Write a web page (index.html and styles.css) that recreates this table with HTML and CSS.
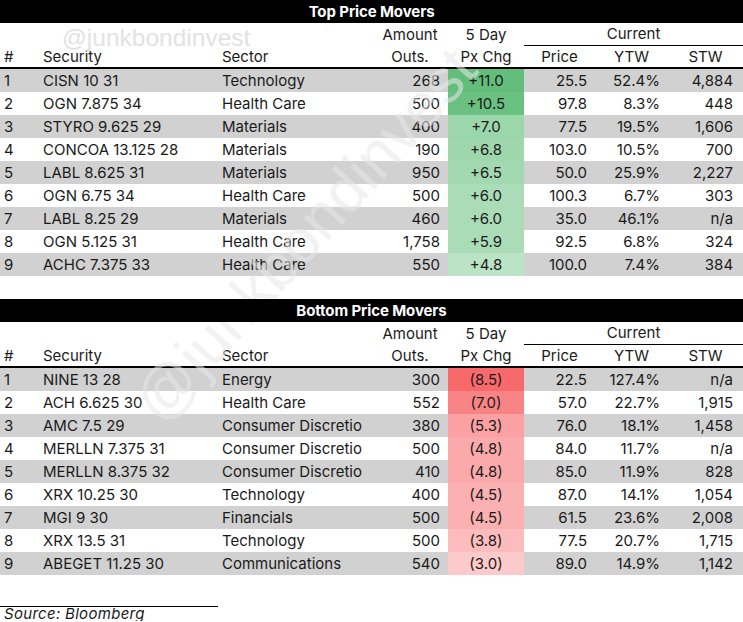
FILE: index.html
```html
<!DOCTYPE html>
<html>
<head>
<meta charset="utf-8">
<link rel="stylesheet" href="styles.css">
</head>
<body>
<div class="page">
  <div class="wm-top">@junkbondinvest</div>
  <div class="wm-diag">@junkbondinvest</div>

  <table class="movers">
    <colgroup>
      <col class="c-num"><col class="c-sec"><col class="c-sector"><col class="c-amt"><col class="c-chg"><col class="c-price"><col class="c-ytw"><col class="c-stw">
    </colgroup>
    <thead>
      <tr class="title"><th colspan="8"><span class="title-text">Top Price Movers</span></th></tr>
      <tr class="h1"><th></th><th></th><th></th><th class="ctr">Amount</th><th class="ctr">5 Day</th><th colspan="3" class="ctr current">Current</th></tr>
      <tr class="h2"><th class="lft num">#</th><th class="lft">Security</th><th class="lft">Sector</th><th class="ctr">Outs.</th><th class="ctr">Px Chg</th><th class="ctr">Price</th><th class="ctr">YTW</th><th class="ctr">STW</th></tr>
    </thead>
    <tbody>
      <tr class="odd"><td class="num">1</td><td>CISN 10 31</td><td>Technology</td><td class="amt">268</td><td class="chg" style="background:rgb(99,190,123)">+11.0</td><td class="price">25.5</td><td class="ytw">52.4%</td><td class="stw">4,884</td></tr>
      <tr><td class="num">2</td><td>OGN 7.875 34</td><td>Health Care</td><td class="amt">500</td><td class="chg" style="background:rgb(106,193,129)">+10.5</td><td class="price">97.8</td><td class="ytw">8.3%</td><td class="stw">448</td></tr>
      <tr class="odd"><td class="num">3</td><td>STYRO 9.625 29</td><td>Materials</td><td class="amt">400</td><td class="chg" style="background:rgb(156,214,171)">+7.0</td><td class="price">77.5</td><td class="ytw">19.5%</td><td class="stw">1,606</td></tr>
      <tr><td class="num">4</td><td>CONCOA 13.125 28</td><td>Materials</td><td class="amt">190</td><td class="chg" style="background:rgb(159,215,173)">+6.8</td><td class="price">103.0</td><td class="ytw">10.5%</td><td class="stw">700</td></tr>
      <tr class="odd"><td class="num">5</td><td>LABL 8.625 31</td><td>Materials</td><td class="amt">950</td><td class="chg" style="background:rgb(163,217,177)">+6.5</td><td class="price">50.0</td><td class="ytw">25.9%</td><td class="stw">2,227</td></tr>
      <tr><td class="num">6</td><td>OGN 6.75 34</td><td>Health Care</td><td class="amt">500</td><td class="chg" style="background:rgb(170,220,183)">+6.0</td><td class="price">100.3</td><td class="ytw">6.7%</td><td class="stw">303</td></tr>
      <tr class="odd"><td class="num">7</td><td>LABL 8.25 29</td><td>Materials</td><td class="amt">460</td><td class="chg" style="background:rgb(170,220,183)">+6.0</td><td class="price">35.0</td><td class="ytw">46.1%</td><td class="stw">n/a</td></tr>
      <tr><td class="num">8</td><td>OGN 5.125 31</td><td>Health Care</td><td class="amt">1,758</td><td class="chg" style="background:rgb(171,220,184)">+5.9</td><td class="price">92.5</td><td class="ytw">6.8%</td><td class="stw">324</td></tr>
      <tr class="odd"><td class="num">9</td><td>ACHC 7.375 33</td><td>Health Care</td><td class="amt">550</td><td class="chg" style="background:rgb(187,227,197)">+4.8</td><td class="price">100.0</td><td class="ytw">7.4%</td><td class="stw">384</td></tr>
    </tbody>
  </table>

  <table class="movers second">
    <colgroup>
      <col class="c-num"><col class="c-sec"><col class="c-sector"><col class="c-amt"><col class="c-chg"><col class="c-price"><col class="c-ytw"><col class="c-stw">
    </colgroup>
    <thead>
      <tr class="title"><th colspan="8"><span class="title-text">Bottom Price Movers</span></th></tr>
      <tr class="h1"><th></th><th></th><th></th><th class="ctr">Amount</th><th class="ctr">5 Day</th><th colspan="3" class="ctr current">Current</th></tr>
      <tr class="h2"><th class="lft num">#</th><th class="lft">Security</th><th class="lft">Sector</th><th class="ctr">Outs.</th><th class="ctr">Px Chg</th><th class="ctr">Price</th><th class="ctr">YTW</th><th class="ctr">STW</th></tr>
    </thead>
    <tbody>
      <tr class="odd"><td class="num">1</td><td>NINE 13 28</td><td>Energy</td><td class="amt">300</td><td class="chg" style="background:rgb(248,105,107)">(8.5)</td><td class="price">22.5</td><td class="ytw">127.4%</td><td class="stw">n/a</td></tr>
      <tr><td class="num">2</td><td>ACH 6.625 30</td><td>Health Care</td><td class="amt">552</td><td class="chg" style="background:rgb(249,132,133)">(7.0)</td><td class="price">57.0</td><td class="ytw">22.7%</td><td class="stw">1,915</td></tr>
      <tr class="odd"><td class="num">3</td><td>AMC 7.5 29</td><td>Consumer Discretio</td><td class="amt">380</td><td class="chg" style="background:rgb(251,161,163)">(5.3)</td><td class="price">76.0</td><td class="ytw">18.1%</td><td class="stw">1,458</td></tr>
      <tr><td class="num">4</td><td>MERLLN 7.375 31</td><td>Consumer Discretio</td><td class="amt">500</td><td class="chg" style="background:rgb(251,170,171)">(4.8)</td><td class="price">84.0</td><td class="ytw">11.7%</td><td class="stw">n/a</td></tr>
      <tr class="odd"><td class="num">5</td><td>MERLLN 8.375 32</td><td>Consumer Discretio</td><td class="amt">410</td><td class="chg" style="background:rgb(251,170,171)">(4.8)</td><td class="price">85.0</td><td class="ytw">11.9%</td><td class="stw">828</td></tr>
      <tr><td class="num">6</td><td>XRX 10.25 30</td><td>Technology</td><td class="amt">400</td><td class="chg" style="background:rgb(251,176,177)">(4.5)</td><td class="price">87.0</td><td class="ytw">14.1%</td><td class="stw">1,054</td></tr>
      <tr class="odd"><td class="num">7</td><td>MGI 9 30</td><td>Financials</td><td class="amt">500</td><td class="chg" style="background:rgb(251,176,177)">(4.5)</td><td class="price">61.5</td><td class="ytw">23.6%</td><td class="stw">2,008</td></tr>
      <tr><td class="num">8</td><td>XRX 13.5 31</td><td>Technology</td><td class="amt">500</td><td class="chg" style="background:rgb(252,188,189)">(3.8)</td><td class="price">77.5</td><td class="ytw">20.7%</td><td class="stw">1,715</td></tr>
      <tr class="odd"><td class="num">9</td><td>ABEGET 11.25 30</td><td>Communications</td><td class="amt">540</td><td class="chg" style="background:rgb(253,202,203)">(3.0)</td><td class="price">89.0</td><td class="ytw">14.9%</td><td class="stw">1,142</td></tr>
    </tbody>
  </table>

  <div class="source">Source: Bloomberg</div>
</div>
</body>
</html>
```

FILE: styles.css
```css
html, body {
  margin: 0;
  padding: 0;
  background: #ffffff;
}

.page {
  position: relative;
  width: 743px;
  font-family: "Inter", "Liberation Sans", sans-serif;
  font-size: 15px;
  color: #1a1a1a;
}

.movers {
  width: 743px;
  table-layout: fixed;
  border-collapse: separate;
  border-spacing: 0;
}

.movers.second {
  margin-top: 23px;
}

.c-num { width: 39px; }
.c-sec { width: 179px; }
.c-sector { width: 154px; }
.c-amt { width: 76px; }
.c-chg { width: 76px; }
.c-price { width: 71px; }
.c-ytw { width: 73px; }
.c-stw { width: 75px; }

.movers th,
.movers td {
  padding: 0 0 0 4px;
  font-weight: normal;
  white-space: nowrap;
  overflow: hidden;
  text-align: left;
  vertical-align: middle;
}

.movers .title th {
  position: relative;
  z-index: 3;
  background: #000000;
  color: #ffffff;
  text-align: center;
  line-height: 23px;
  padding: 0;
}

.title-text {
  font-weight: 700;
  font-size: 15px;
  letter-spacing: -0.1px;
}

.movers .h1 th {
  line-height: 22px;
  height: 22px;
}

.movers .h1 th.current {
  border-bottom: 1px solid #000000;
}

.movers .h2 th {
  line-height: 21px;
  border-bottom: 2px solid #000000;
}

.movers th.ctr {
  text-align: center;
  padding: 0;
}

.movers td {
  line-height: 23px;
  height: 23px;
}

.movers tr.odd td {
  background: #d1d1d1;
}

.movers td.amt {
  text-align: right;
  padding: 0 8px 0 0;
}

.movers td.chg {
  text-align: center;
  padding: 0;
}

.movers td.price,
.movers td.ytw {
  text-align: right;
  padding: 0 8px 0 0;
}

.movers td.stw {
  text-align: right;
  padding: 0 10px 0 0;
}

.source {
  box-sizing: border-box;
  margin-top: 31px;
  width: 218px;
  border-top: 1px solid #000000;
  padding: 0 0 0 4px;
  font-style: italic;
  font-size: 15px;
  line-height: 14px;
  letter-spacing: 0.3px;
}

.wm-top {
  position: absolute;
  left: 62px;
  top: 26px;
  z-index: 1;
  font-family: "Liberation Sans", sans-serif;
  font-size: 24.5px;
  line-height: 24.5px;
  color: #e2e2e2;
  pointer-events: none;
}

.wm-diag {
  position: absolute;
  left: 305px;
  top: 235px;
  z-index: 2;
  transform: translate(-50%, -50%) rotate(-48deg);
  font-family: "Liberation Sans", sans-serif;
  font-size: 62px;
  line-height: 62px;
  white-space: nowrap;
  color: rgba(232, 232, 232, 0.55);
  pointer-events: none;
}
```
